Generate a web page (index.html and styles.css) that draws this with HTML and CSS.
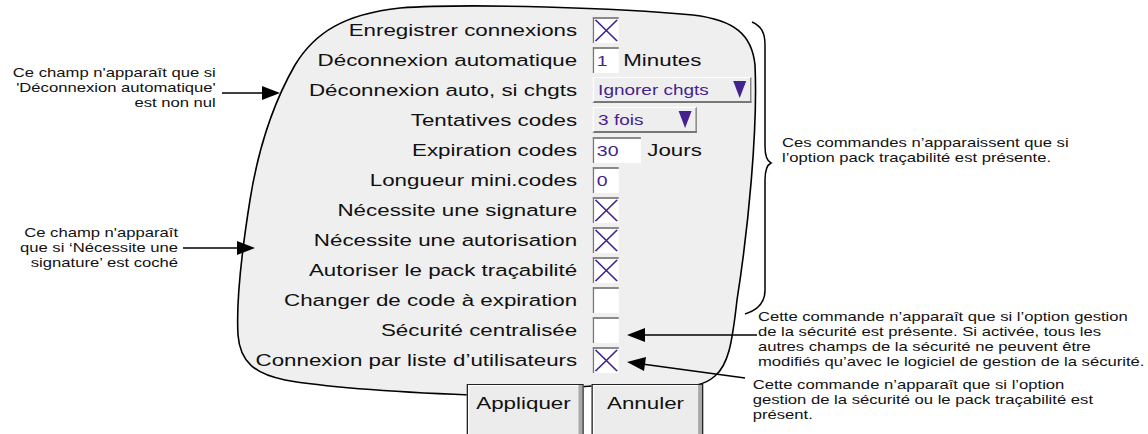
FILE: index.html
```html
<!DOCTYPE html>
<html lang="fr">
<head>
  <meta charset="UTF-8">
  <meta name="viewport" content="width=device-width, initial-scale=1.0">
  <title>Sécurité - connexions</title>
  <link rel="stylesheet" href="styles.css">
</head>
<body>
  <div class="stage">
    <!-- outline of the torn-out screen, brace and leader arrows -->
    <svg class="art" viewBox="0 0 1148 434">
      <path class="blob" d="M 470 395 C 420 393, 330 388, 285 380 C 255 374, 240 362, 238 335 C 236 300, 242 250, 250 200 C 258 150, 272 105, 295 65 C 315 32, 345 14, 400 8 C 470 3, 620 8, 693 15 C 735 20, 752 35, 755 65 C 758 130, 748 230, 737 300 C 732 345, 728 365, 715 376 C 708 382, 702 384, 697 385 L 592 386 L 470 395 Z"/>
      <path class="brace" d="M 752 22 C 761 26, 765 32, 765 45 L 765 146 C 765 157, 767 161, 771 163 C 767 165, 765 169, 765 180 L 765 290 C 765 302, 758 310, 745 314"/>
      <path class="lead" d="M 222 93 L 264 93"/>
      <polygon class="head" points="262,86 280,93 262,100"/>
      <path class="lead" d="M 183 248 L 240 248"/>
      <polygon class="head" points="237,241 255,248 237,255"/>
      <path class="lead" d="M 757 335 L 642 335"/>
      <polygon class="head" points="645,328 627,335 645,342"/>
      <path class="lead" d="M 745 378 L 642 364"/>
      <polygon class="head" points="646,357 627,362 644,371"/>
    </svg>

    <div class="sheet">
      <div class="form">
        <span class="label">Enregistrer connexions</span>
        <div class="field">
          <span class="box check"><svg class="x" viewBox="0 0 18 24" preserveAspectRatio="none"><path d="M1 1 L17 23 M17 1 L1 23"/></svg></span>
        </div>

        <span class="label">Déconnexion automatique</span>
        <div class="field">
          <span class="box num">1</span>
          <span class="unit">Minutes</span>
        </div>

        <span class="label">Déconnexion auto, si chgts</span>
        <div class="field">
          <div class="select select-wide"><span>Ignorer chgts</span><i class="caret"></i></div>
        </div>

        <span class="label">Tentatives codes</span>
        <div class="field">
          <div class="select select-short"><span>3 fois</span><i class="caret"></i></div>
        </div>

        <span class="label">Expiration codes</span>
        <div class="field">
          <span class="box num num-wide">30</span>
          <span class="unit unit-days">Jours</span>
        </div>

        <span class="label">Longueur mini.codes</span>
        <div class="field">
          <span class="box num">0</span>
        </div>

        <span class="label">Nécessite une signature</span>
        <div class="field">
          <span class="box check"><svg class="x" viewBox="0 0 18 24" preserveAspectRatio="none"><path d="M1 1 L17 23 M17 1 L1 23"/></svg></span>
        </div>

        <span class="label">Nécessite une autorisation</span>
        <div class="field">
          <span class="box check"><svg class="x" viewBox="0 0 18 24" preserveAspectRatio="none"><path d="M1 1 L17 23 M17 1 L1 23"/></svg></span>
        </div>

        <span class="label">Autoriser le pack traçabilité</span>
        <div class="field">
          <span class="box check"><svg class="x" viewBox="0 0 18 24" preserveAspectRatio="none"><path d="M1 1 L17 23 M17 1 L1 23"/></svg></span>
        </div>

        <span class="label">Changer de code à expiration</span>
        <div class="field">
          <span class="box check"></span>
        </div>

        <span class="label">Sécurité centralisée</span>
        <div class="field">
          <span class="box check"></span>
        </div>

        <span class="label">Connexion par liste d’utilisateurs</span>
        <div class="field">
          <span class="box check"><svg class="x" viewBox="0 0 18 24" preserveAspectRatio="none"><path d="M1 1 L17 23 M17 1 L1 23"/></svg></span>
        </div>
      </div>

      <div class="actions">
        <button class="btn btn-apply">Appliquer</button>
        <button class="btn btn-cancel">Annuler</button>
      </div>

      <!-- call-outs -->
      <p class="note note-auto">Ce champ n'apparaît que si<br>'Déconnexion automatique'<br>est non nul</p>
      <p class="note note-sign">Ce champ n'apparaît<br>que si ‘Nécessite une<br>signature’ est coché</p>
      <p class="note note-pack">Ces commandes n’apparaissent que si<br>l’option pack traçabilité est présente.</p>
      <p class="note note-central">Cette commande n’apparaît que si l’option gestion<br>de la sécurité est présente. Si activée, tous les<br>autres champs de la sécurité ne peuvent être<br>modifiés qu’avec le logiciel de gestion de la sécurité.</p>
      <p class="note note-list">Cette commande n’apparaît que si l’option<br>gestion de la sécurité ou le pack traçabilité est<br>présent.</p>
    </div>
  </div>
</body>
</html>
```

FILE: styles.css
```css
body {
  margin: 0;
  background: #fff;
  font-family: "Liberation Sans", Arial, sans-serif;
  color: #111;
}

.stage {
  position: relative;
  width: 1148px;
  height: 434px;
  overflow: hidden;
}

.art {
  position: absolute;
  left: 0;
  top: 0;
  width: 1148px;
  height: 434px;
}

.blob {
  fill: #efefef;
  stroke: #000;
  stroke-width: 1.6;
}

.brace,
.lead {
  fill: none;
  stroke: #000;
  stroke-width: 1.5;
}

.head {
  fill: #000;
}

/* the original capture is wider than tall, so the sheet is drawn narrow and stretched */
.sheet {
  position: relative;
  width: 883px;
  height: 434px;
  transform: scaleX(1.3);
  transform-origin: 0 0;
}

.form {
  display: grid;
  grid-template-columns: 264px auto;
  column-gap: 11.6px;
  row-gap: 4px;
  padding: 17px 0 0 180px;
}

.label {
  font-size: 17.2px;
  line-height: 26px;
  text-align: right;
  white-space: nowrap;
}

.field {
  display: flex;
  align-items: center;
  gap: 3px;
  height: 26px;
}

.box {
  box-sizing: border-box;
  display: block;
  height: 26px;
  background: #fff;
  border-left: 1.5px solid #777;
  border-top: 2px solid #8a8a8a;
  color: #44238f;
}

.check {
  width: 20.8px;
  padding: 0 0.5px 1px 0.5px;
}

.x {
  display: block;
  width: 100%;
  height: 100%;
}

.x path {
  fill: none;
  stroke: #44238f;
  stroke-width: 1.3;
}

.num {
  width: 20.8px;
  padding-left: 2.5px;
  font-size: 15px;
  line-height: 23px;
}

.num-wide {
  width: 37.7px;
}

.unit {
  font-size: 17.2px;
}

.unit-days {
  margin-left: 1.6px;
}

.select {
  box-sizing: border-box;
  display: flex;
  align-items: center;
  justify-content: space-between;
  height: 26px;
  padding: 0 2.5px 0 3.5px;
  background: #eeeeee;
  border-top: 1px solid #fff;
  border-left: 1px solid #fff;
  border-right: 1.5px solid #777;
  border-bottom: 2px solid #777;
  color: #44238f;
  font-size: 14.6px;
}

.select-wide {
  width: 122.3px;
}

.select-short {
  width: 80px;
}

.caret {
  width: 0;
  height: 0;
  border-left: 5.8px solid transparent;
  border-right: 5.8px solid transparent;
  border-top: 17px solid #44238f;
}

.actions {
  display: flex;
  align-items: flex-start;
  gap: 6.2px;
  margin: 11px 0 0 359.2px;
}

.btn {
  box-sizing: border-box;
  padding: 7px 3px 33px 0;
  border: 1px solid #222;
  background: #ececec;
  box-shadow: inset -3px -3px 0 #a9a9a9, inset 1px 1px 0 #fff;
  font-family: inherit;
  font-size: 17.2px;
  line-height: 22px;
  color: #111;
  text-align: center;
}

.btn-apply {
  width: 90px;
}

.btn-cancel {
  width: 85.4px;
}

.note {
  position: absolute;
  margin: 0;
  font-size: 12.8px;
  line-height: 15px;
  white-space: nowrap;
}

.note-auto {
  left: 0;
  top: 65px;
  width: 166px;
  text-align: right;
}

.note-sign {
  left: 0;
  top: 225px;
  width: 137px;
  text-align: right;
}

.note-pack {
  left: 601.5px;
  top: 135px;
}

.note-central {
  left: 583px;
  top: 308.5px;
}

.note-list {
  left: 579px;
  top: 376.5px;
}
```
